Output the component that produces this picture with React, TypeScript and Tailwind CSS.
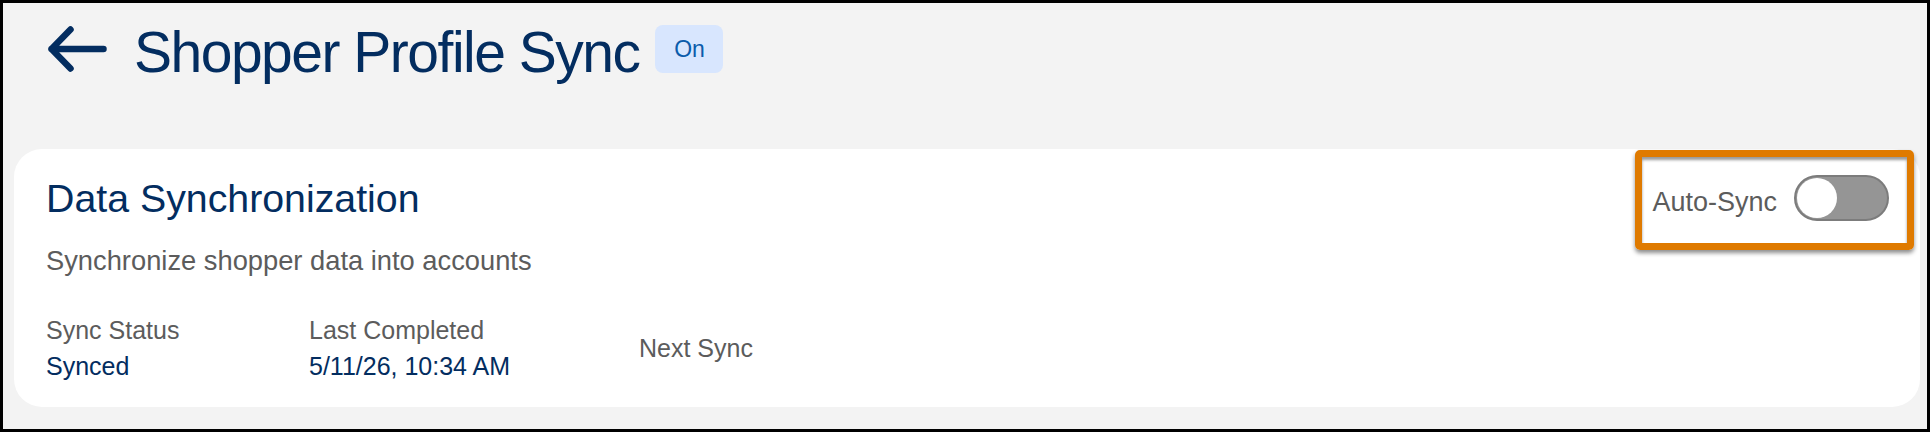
import { useState } from 'react'

const stats = [
  { label: 'Sync Status', value: 'Synced', width: 'w-[263px]' },
  { label: 'Last Completed', value: '5/11/26, 10:34 AM', width: 'w-[330px]' },
  { label: 'Next Sync', value: '', width: '' },
]

function BackArrow() {
  return (
    <svg width="60" height="48" viewBox="0 0 60 48" fill="none" className="shrink-0">
      <path
        d="M56.5 24H4.5M23.5 4.5L4.5 24L23.5 43.5"
        stroke="#032d60"
        strokeWidth="6.5"
        strokeLinecap="round"
        strokeLinejoin="round"
      />
    </svg>
  )
}

function Toggle({ on, onChange }: { on: boolean; onChange: (v: boolean) => void }) {
  return (
    <button
      onClick={() => onChange(!on)}
      className={`flex h-[46px] w-[95px] shrink-0 items-center rounded-full border-2 px-[1px] ${
        on ? 'justify-end border-[#0b5cab] bg-[#0176d3]' : 'justify-start border-[#7c7c7c] bg-[#959595]'
      }`}
    >
      <span className="h-[40px] w-[40px] rounded-full bg-white" />
    </button>
  )
}

export default function App() {
  const [autoSync, setAutoSync] = useState(false)

  return (
    <div className="h-[432px] w-[1930px] overflow-hidden border-[3px] border-black bg-[#f3f3f3] font-['Liberation_Sans',Arial,sans-serif]">
      {/* Header */}
      <header className="flex h-[92px] items-center pl-[44px]">
        <BackArrow />
        <h1 className="ml-[27px] pt-[6px] text-[57px] leading-[57px] tracking-[-1.5px] text-[#032d60]">
          Shopper Profile Sync
        </h1>
        <span className="ml-[16px] flex h-[48px] w-[68px] items-center justify-center rounded-[8px] bg-[#d8e6fe] text-[23px] leading-none text-[#0b5cab]">
          On
        </span>
      </header>

      {/* Card */}
      <section className="ml-[11px] mr-[7px] mt-[54px] h-[258px] rounded-[28px] bg-white pl-[32px] pr-[31px] pt-[30px]">
        <div className="flex h-[39px] items-start justify-between">
          <h2 className="text-[39.3px] leading-[39px] text-[#032d60]">Data Synchronization</h2>
          <div className="relative -mt-[4px] flex items-center gap-[17px]">
            <span className="mt-[9px] text-[27px] leading-[27px] text-[#5c5c5c]">Auto-Sync</span>
            <Toggle on={autoSync} onChange={setAutoSync} />
            {/* highlight annotation */}
            <div className="pointer-events-none absolute bottom-[-29px] left-[-17px] right-[-25px] top-[-25px] rounded-[5px] border-[7px] border-[#df7a00] shadow-[0_3px_4px_rgba(0,0,0,0.45),inset_0_3px_3px_rgba(0,0,0,0.4)]" />
          </div>
        </div>

        <p className="mt-[29px] text-[27.3px] leading-[27px] text-[#5c5c5c]">
          Synchronize shopper data into accounts
        </p>

        <div className="mt-[38px] flex items-center">
          {stats.map((s) => (
            <div key={s.label} className={`${s.width} shrink-0 text-[25px] leading-[36px]`}>
              <div className="text-[#5c5c5c]">{s.label}</div>
              {s.value && <div className="text-[#032d60]">{s.value}</div>}
            </div>
          ))}
        </div>
      </section>
    </div>
  )
}
